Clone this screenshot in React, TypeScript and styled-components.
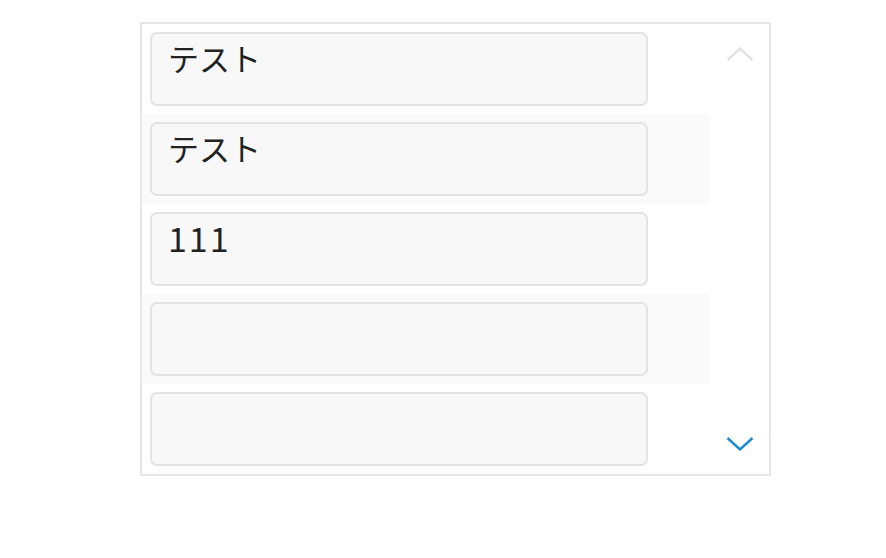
import React from "react";
import styled, { createGlobalStyle } from "styled-components";

const Global = createGlobalStyle`
  html, body { margin: 0; padding: 0; background: #ffffff; }
  body { font-family: "Noto Sans CJK JP", "Noto Sans", sans-serif; }
`;

const Page = styled.div`
  padding: 22px 0 0 140px;
`;

const Box = styled.div`
  width: 627px;
  height: 450px;
  border: 2px solid #e6e6e6;
  display: flex;
  overflow: hidden;
`;

const List = styled.div`
  width: 568px;
  display: flex;
  flex-direction: column;
`;

const Row = styled.div<{ $striped: boolean }>`
  height: 90px;
  box-sizing: border-box;
  padding: 8px;
  background: ${(p) => (p.$striped ? "#fafafa" : "#ffffff")};
`;

const Field = styled.div`
  width: 498px;
  height: 74px;
  box-sizing: border-box;
  border: 2px solid #e3e3e3;
  border-radius: 7px;
  background: #f8f8f8;
  padding: 6px 16px 0;
  font-size: 31px;
  line-height: 36px;
  color: #222222;
`;

const Digits = styled.span`
  font-size: 34px;
  letter-spacing: 2px;
`;

const Arrows = styled.div`
  flex: 1;
  display: flex;
  flex-direction: column;
  align-items: center;
  justify-content: space-between;
  padding: 23px 0 23px;
`;

const ArrowBtn = styled.div<{ $active: boolean }>`
  width: 28px;
  height: 14px;
  color: ${(p) => (p.$active ? "#1a8ad4" : "#e3e3e3")};
  display: flex;
`;

const Chevron = ({ up }: { up: boolean }) => (
  <svg width="28" height="14" viewBox="0 0 28 14" fill="none">
    <path
      d={up ? "M1.5 13 L14 1.5 L26.5 13" : "M1.5 1 L14 12.5 L26.5 1"}
      stroke="currentColor"
      strokeWidth="2.4"
    />
  </svg>
);

const values = ["テスト", "テスト", "111", "", ""];

export default function App() {
  return (
    <>
      <Global />
      <Page>
        <Box>
          <List>
            {values.map((v, i) => (
              <Row key={i} $striped={i % 2 === 1}>
                <Field>{/^\d+$/.test(v) ? <Digits>{v}</Digits> : v}</Field>
              </Row>
            ))}
          </List>
          <Arrows>
            <ArrowBtn $active={false}>
              <Chevron up />
            </ArrowBtn>
            <ArrowBtn $active>
              <Chevron up={false} />
            </ArrowBtn>
          </Arrows>
        </Box>
      </Page>
    </>
  );
}
